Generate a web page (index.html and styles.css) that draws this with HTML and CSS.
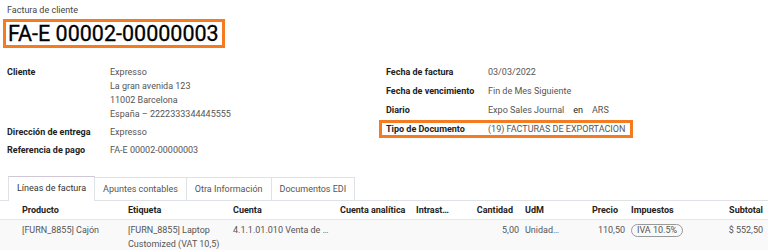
FILE: index.html
```html
<!DOCTYPE html>
<html lang="es">
<head>
  <meta charset="UTF-8" />
  <meta name="viewport" content="width=device-width, initial-scale=1.0"/>
  <title>FA-E 00002-00000003</title>
  <link rel="stylesheet" href="styles.css">
</head>
<body>

  <!-- Invoice header -->
  <div class="sheet-head">
    <div class="doc-type">Factura de cliente</div>
    <h1 class="doc-name">FA-E 00002-00000003</h1>

    <div class="groups">
      <div class="group group-left">
        <div class="field">
          <div class="field-label">Cliente</div>
          <div class="field-value">
            Expresso<br>
            La gran avenida 123<br>
            11002 Barcelona<br>
            España – 2222333344445555
          </div>
        </div>
        <div class="field">
          <div class="field-label">Dirección de entrega</div>
          <div class="field-value">Expresso</div>
        </div>
        <div class="field">
          <div class="field-label">Referencia de pago</div>
          <div class="field-value">FA-E 00002-00000003</div>
        </div>
      </div>

      <div class="group group-right">
        <div class="field">
          <div class="field-label">Fecha de factura</div>
          <div class="field-value">03/03/2022</div>
        </div>
        <div class="field">
          <div class="field-label">Fecha de vencimiento</div>
          <div class="field-value">Fin de Mes Siguiente</div>
        </div>
        <div class="field">
          <div class="field-label">Diario</div>
          <div class="field-value">Expo Sales Journal<span class="in-word">en</span>ARS</div>
        </div>
        <div class="field field-marked">
          <div class="field-label">Tipo de Documento</div>
          <div class="field-value">(19) FACTURAS DE EXPORTACION</div>
        </div>
      </div>
    </div>
  </div>

  <!-- Notebook tabs -->
  <ul class="tabs">
    <li class="tab active">Líneas de factura</li>
    <li class="tab">Apuntes contables</li>
    <li class="tab">Otra Información</li>
    <li class="tab">Documentos EDI</li>
  </ul>

  <table class="lines">
    <colgroup>
      <col style="width:128px"><col style="width:105px"><col style="width:107px">
      <col style="width:76px"><col style="width:54px"><col style="width:55px">
      <col style="width:55px"><col style="width:51px"><col style="width:59px">
      <col style="width:78px">
    </colgroup>
    <thead>
      <tr>
        <th class="first">Producto</th>
        <th>Etiqueta</th>
        <th>Cuenta</th>
        <th>Cuenta analítica</th>
        <th>Intrast…</th>
        <th class="num qty">Cantidad</th>
        <th>UdM</th>
        <th class="num price">Precio</th>
        <th>Impuestos</th>
        <th class="num last">Subtotal</th>
      </tr>
    </thead>
    <tbody>
      <tr>
        <td class="first">[FURN_8855] Cajón</td>
        <td>[FURN_8855] Laptop Customized (VAT 10,5)</td>
        <td>4.1.1.01.010 Venta de …</td>
        <td></td>
        <td></td>
        <td class="num">5,00</td>
        <td>Unidad…</td>
        <td class="num">110,50</td>
        <td><span class="tax-badge">IVA 10.5%</span></td>
        <td class="num last">$ 552,50</td>
      </tr>
    </tbody>
  </table>

</body>
</html>
```

FILE: styles.css
```css
body {
  margin: 0;
  background: white;
  font-family: Roboto, "Noto Sans", sans-serif;
  font-size: 9px;
  color: #555;
}

.sheet-head {
  padding-left: 7px;
}

.doc-type {
  padding-top: 3px;
  line-height: 14px;
  color: #444;
}

/* orange frame round the invoice number */
.doc-name {
  display: inline-block;
  margin: 2px 0 0 -4px;
  padding: 0 3px 0 2px;
  border: 3px solid #f47b20;
  font-size: 21.5px;
  font-weight: normal;
  line-height: 23px;
  color: #000;
  -webkit-text-stroke: 0.3px #000;
}

.groups {
  display: flex;
  margin-top: 17px;
}

.group {
  display: flex;
  flex-direction: column;
  line-height: 14px;
}

.group-left {
  width: 379px;
  gap: 4px;
}

.group-right {
  gap: 5px;
}

.field {
  display: flex;
}

.field-label {
  flex: none;
  font-weight: bold;
  color: #222;
}

.group-left .field-label {
  width: 103px;
}

.group-right .field-label {
  width: 102px;
}

.in-word {
  margin: 0 9px;
  color: #222;
}

.field-marked {
  position: relative;
}

.field-marked::after {
  content: "";
  position: absolute;
  top: -2px;
  bottom: -2px;
  left: -7px;
  right: -8px;
  border: 3px solid #f47b20;
  pointer-events: none;
}

.tabs {
  display: flex;
  list-style: none;
  margin: 19px 0 0;
  padding: 0 0 0 8px;
  border-bottom: 1px solid #dee2e6;
}

.tab {
  padding: 0 8px;
  line-height: 22px;
  border: 1px solid #dee2e6;
  border-bottom: none;
  margin-right: -1px;
  margin-top: 1px;
  color: #555;
}

.tab.active {
  margin-top: 0;
  margin-bottom: -1px;
  line-height: 23px;
  background: white;
  border-top-color: #cfc6d6;
  color: #333;
}

.lines {
  width: 768px;
  table-layout: fixed;
  border-collapse: collapse;
}

.lines th {
  height: 18px;
  padding: 0;
  text-align: left;
  font-weight: bold;
  color: #222;
  border-bottom: 1px solid #e6e6e6;
  white-space: nowrap;
}

.lines td {
  padding: 3px 0 8px;
  vertical-align: top;
  line-height: 14px;
  background: #f9f9f9;
}

.lines .first {
  padding-left: 22px;
}

.lines .num {
  text-align: right;
  padding-right: 6px;
}

.lines th.qty {
  padding-right: 12px;
}

.lines th.price {
  padding-right: 13px;
}

.lines .last {
  padding-right: 5px;
}

.tax-badge {
  display: inline-block;
  padding: 0 5px;
  line-height: 11px;
  border: 1px solid #999;
  border-radius: 7px;
  color: #555;
}
```
